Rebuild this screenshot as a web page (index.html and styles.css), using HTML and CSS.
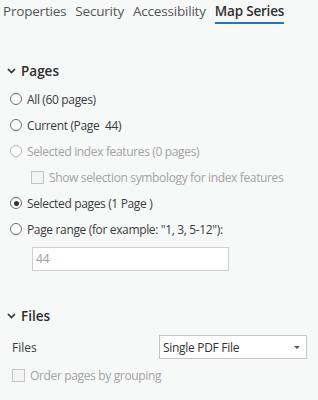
FILE: index.html
```html
<!DOCTYPE html>
<html>
<head>
<meta charset="utf-8">
<link rel="stylesheet" href="styles.css">
</head>
<body>
<div class="panel">
  <nav class="tabs">
    <span class="tab">Properties</span>
    <span class="tab">Security</span>
    <span class="tab">Accessibility</span>
    <span class="tab active">Map Series</span>
  </nav>

  <section class="group pages">
    <div class="group-head">
      <svg class="chev" width="9" height="6" viewBox="0 0 9 6"><path d="M1 1 L4.5 4.5 L8 1" fill="none" stroke="#333" stroke-width="1.7"/></svg>
      <span>Pages</span>
    </div>
    <div class="row radio-row"><span class="radio"></span><span>All (60 pages)</span></div>
    <div class="row radio-row"><span class="radio"></span><span>Current (Page&nbsp; 44)</span></div>
    <div class="row radio-row disabled"><span class="radio"></span><span>Selected index features (0 pages)</span></div>
    <div class="row check-row indent disabled"><span class="check"></span><span>Show selection symbology for index features</span></div>
    <div class="row radio-row"><span class="radio checked"></span><span>Selected pages (1 Page )</span></div>
    <div class="row radio-row"><span class="radio"></span><span>Page range (for example: "1, 3, 5-12"):</span></div>
    <div class="input-wrap"><div class="input">44</div></div>
  </section>

  <section class="group files">
    <div class="group-head">
      <svg class="chev" width="9" height="6" viewBox="0 0 9 6"><path d="M1 1 L4.5 4.5 L8 1" fill="none" stroke="#333" stroke-width="1.7"/></svg>
      <span>Files</span>
    </div>
    <div class="field-row">
      <span class="label">Files</span>
      <div class="select"><span>Single PDF File</span><span class="caret"></span></div>
    </div>
    <div class="row check-row disabled"><span class="check"></span><span>Order pages by grouping</span></div>
  </section>
</div>
</body>
</html>
```

FILE: styles.css
```css
html, body {
  margin: 0;
  padding: 0;
  background: #f7f8f8;
}
body {
  font-family: "Open Sans", "Noto Sans", sans-serif;
  font-size: 12px;
  color: #3b3b3b;
  width: 318px;
  height: 400px;
  overflow: hidden;
}
.panel {
  display: flex;
  flex-direction: column;
}
.tabs {
  display: flex;
  gap: 9px;
  padding: 2px 0 0 3px;
  height: 24px;
  box-sizing: border-box;
}
.tab {
  font-size: 13.5px;
  color: #555;
  line-height: 18px;
  letter-spacing: -0.2px;
}
.tab.active {
  color: #2f2f2f;
  font-weight: 600;
  border-bottom: 2px solid #1a7ac8;
  height: 20px;
}
.group-head {
  display: flex;
  align-items: center;
  gap: 5px;
  font-weight: 600;
  font-size: 13.5px;
  color: #2e2e2e;
  padding-left: 7px;
  height: 20px;
}
.pages {
  padding-top: 37px;
}
.pages .group-head {
  margin-bottom: 5px;
}
.row {
  display: flex;
  align-items: center;
  height: 26px;
  gap: 5px;
  padding-left: 10px;
  letter-spacing: -0.35px;
}
.disabled {
  color: #a3a3a3;
}
.radio {
  width: 12px;
  height: 12px;
  border: 1px solid #6a6a6a;
  border-radius: 50%;
  background: #fff;
  box-sizing: border-box;
  position: relative;
  flex: none;
}
.disabled .radio {
  border-color: #b5b5b5;
}
.radio.checked::after {
  content: "";
  position: absolute;
  left: 2.5px;
  top: 2.5px;
  width: 5px;
  height: 5px;
  border-radius: 50%;
  background: #333;
}
.check {
  width: 13px;
  height: 13px;
  border: 1px solid #c4c4c4;
  background: #f4f4f4;
  box-sizing: border-box;
  flex: none;
}
.indent {
  padding-left: 31px;
}
.input-wrap {
  padding: 5px 0 0 32px;
}
.input {
  width: 197px;
  height: 24px;
  box-sizing: border-box;
  border: 1px solid #cfcfcf;
  background: #fff;
  color: #9d9d9d;
  padding-left: 3px;
  line-height: 22px;
}
.files {
  padding-top: 35px;
}
.files .group-head {
  margin-bottom: 9px;
}
.field-row {
  display: flex;
  align-items: center;
  justify-content: space-between;
  padding: 0 11px 0 12px;
  height: 24px;
}
.select {
  width: 148px;
  height: 24px;
  box-sizing: border-box;
  border: 1px solid #c6c6c6;
  background: #fff;
  display: flex;
  align-items: center;
  justify-content: space-between;
  padding: 0 6px 0 3px;
  color: #333;
  letter-spacing: -0.3px;
}
.caret {
  width: 0;
  height: 0;
  border-left: 3px solid transparent;
  border-right: 3px solid transparent;
  border-top: 3px solid #555;
}
.files .check-row {
  padding-left: 12px;
  margin-top: 3px;
}
```
